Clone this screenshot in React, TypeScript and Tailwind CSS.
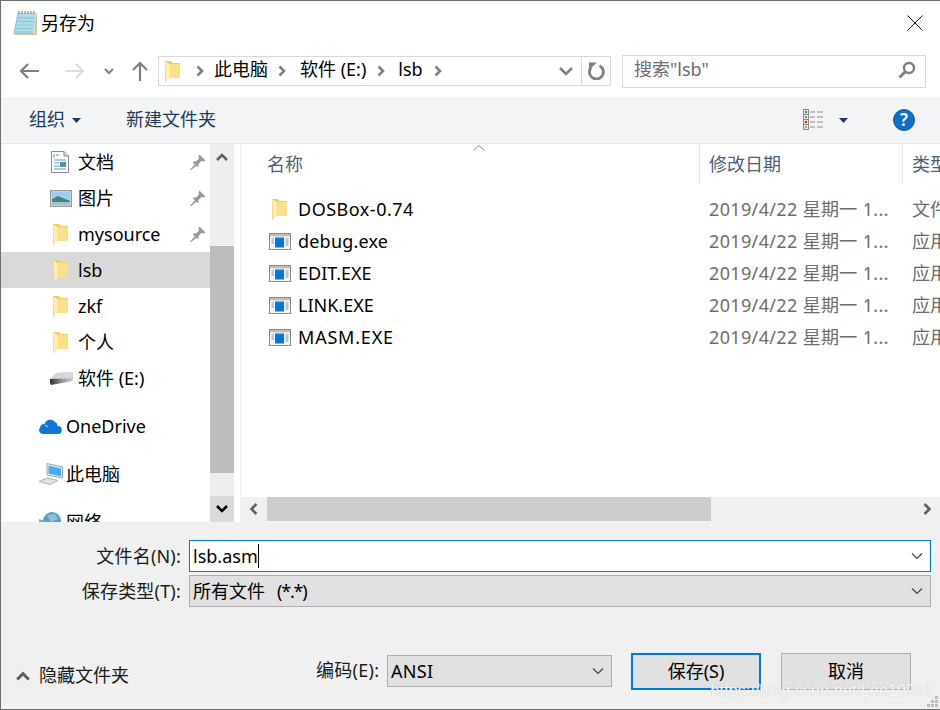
import React from "react";

const F = '"Noto Sans","Noto Sans CJK SC",sans-serif';

function Folder({ className = "" }: { className?: string }) {
  return (
    <svg width="15" height="21" viewBox="0 0 15 21" className={className}>
      <path d="M0 0 H6 L7.5 2 H15 V17 H4 Z" fill="#eec868" />
      <path d="M4 3 H15 V17 H4 Z" fill="#fbdf8c" />
      <path d="M0 0 L4.5 3 V18 L0.5 21 Z" fill="#ffeeb0" />
      <path d="M0 0 L0.5 21" stroke="#eecb70" strokeWidth="0.8" />
    </svg>
  );
}

function ExeIcon() {
  return (
    <svg width="22" height="17" viewBox="0 0 22 17">
      <rect x="0.5" y="0.5" width="21" height="16" fill="#f6f6f6" stroke="#8c8c8c" />
      <rect x="1" y="1" width="20" height="2.5" fill="#bfbfbf" />
      <rect x="6" y="4.5" width="9" height="10" fill="#0078d7" />
      <path d="M2.5 6h2.5M2.5 8h2.5M2.5 10h2.5M16.5 6h3M16.5 8h3M16.5 10h3M16.5 12h3" stroke="#8f8f8f" />
    </svg>
  );
}

function Pin() {
  return (
    <svg width="16" height="17" viewBox="0 0 16 17">
      <path d="M9.5 0.5 L15.5 6.5 L13.5 7.5 L11.5 7 L8.5 10 L8.5 12.5 L7.5 13 L3 8.5 L3.5 7.5 L6 7.5 L9 4.5 L8.5 2.5 Z" fill="#929ba3" />
      <path d="M5 10.5 L0.5 16 L6 11.5 Z" fill="#929ba3" stroke="#929ba3" />
    </svg>
  );
}

function Chev({ dir, color = "#606060", size = 12 }: { dir: "up" | "down" | "left" | "right"; color?: string; size?: number }) {
  const d = {
    up: "M1 9 L6 4 L11 9",
    down: "M1 3 L6 8 L11 3",
    left: "M8.5 1 L3.5 6 L8.5 11",
    right: "M3.5 1 L8.5 6 L3.5 11",
  }[dir];
  return (
    <svg width={size} height={size} viewBox="0 0 12 12">
      <path d={d} fill="none" stroke={color} strokeWidth="2.6" />
    </svg>
  );
}

function ThinChev() {
  return (
    <svg width="12" height="8" viewBox="0 0 12 8">
      <path d="M1 1.5 L6 6.5 L11 1.5" fill="none" stroke="#444" strokeWidth="1.2" />
    </svg>
  );
}

function Crumb() {
  return (
    <svg width="10" height="12" viewBox="0 0 10 12" className="shrink-0">
      <path d="M2.5 1.5 L7 6 L2.5 10.5" fill="none" stroke="#808080" strokeWidth="2.6" />
    </svg>
  );
}

function SideRow({ icon, label, pin, active, indent = "pl-[50px]", gap = "w-[27px]" }: { icon: React.ReactNode; label: string; pin?: boolean; active?: boolean; indent?: string; gap?: string }) {
  return (
    <div className={`h-[36px] flex items-center shrink-0 ${indent} pr-[4px] ${active ? "bg-[#d9d9d9]" : ""}`}>
      <div className={`${gap} flex items-center shrink-0`}>{icon}</div>
      <span className="flex-1 text-[18px] text-black whitespace-nowrap">{label}</span>
      {pin && <Pin />}
    </div>
  );
}

function FileRow({ icon, name, type, track = "" }: { icon: React.ReactNode; name: string; type: string; track?: string }) {
  return (
    <div className="h-[32px] flex items-center text-[18px] whitespace-nowrap">
      <div className="w-[29px] ml-[28px] flex justify-start shrink-0">{icon}</div>
      <span className={`w-[411px] shrink-0 text-black ${track}`}>{name}</span>
      <span className="w-[203px] shrink-0 text-[#6d6d6d] tracking-[0.35px]">2019/4/22 星期一 1...</span>
      <span className="text-[#6d6d6d]">{type}</span>
    </div>
  );
}

export default function App() {
  return (
    <div
      className="w-[940px] h-[710px] flex flex-col overflow-hidden relative bg-white border-t border-l border-b border-[#6e6e6e] text-black"
      style={{ fontFamily: F }}
    >
      {/* title bar */}
      <div className="h-[44px] shrink-0 flex items-center pl-[12px] pr-[16px]">
        <svg width="24" height="26" viewBox="0 0 24 26" className="mr-[4px]">
          <path d="M5 3 H23 L21 24 H1 Z" fill="#aeddea" />
          <path d="M4.5 8h17M4 11.5h17M3.5 15h17M3 18.5h17M2.5 22h17" stroke="#86c3d6" />
          <path d="M5 3 L1 24 H21" fill="none" stroke="#6fb2c8" strokeWidth="0.8" />
          <path d="M21 24 L23 3 L24 4 V25 L2 25 L1 24 Z" fill="#cfc6a2" />
          <path d="M6 1v3M9 1v3M12 1v3M15 1v3M18 1v3M21 1v3" stroke="#7f8f96" strokeWidth="1.2" />
        </svg>
        <span className="text-[18px] flex-1">另存为</span>
        <svg width="16" height="16" viewBox="0 0 16 16" className="mr-[1px]">
          <path d="M0.5 0.5 L15.5 15.5 M15.5 0.5 L0.5 15.5" stroke="#111" strokeWidth="1" />
        </svg>
      </div>

      {/* nav bar */}
      <div className="h-[52px] shrink-0 flex items-center">
        <svg width="20" height="16" viewBox="0 0 20 16" className="ml-[18px]">
          <path d="M20 8 H2 M9 1 L2 8 L9 15" fill="none" stroke="#7f7f7f" strokeWidth="2.2" />
        </svg>
        <svg width="20" height="16" viewBox="0 0 20 16" className="ml-[26px]">
          <path d="M0 8 H18 M11 1 L18 8 L11 15" fill="none" stroke="#dcdcdc" strokeWidth="2.2" />
        </svg>
        <svg width="10" height="7" viewBox="0 0 10 7" className="ml-[19px]">
          <path d="M1 1 L5 5 L9 1" fill="none" stroke="#808080" strokeWidth="2" />
        </svg>
        <svg width="16" height="20" viewBox="0 0 16 20" className="ml-[18px]">
          <path d="M8 20 V2 M1 9 L8 2 L15 9" fill="none" stroke="#7f7f7f" strokeWidth="2.2" />
        </svg>
        <div className="ml-[10px] w-[453px] h-[30px] border border-[#d9d9d9] flex items-center">
          <Folder className="ml-[6px] mr-[15px]" />
          <Crumb />
          <span className="text-[18px] ml-[9px] mr-[9px] pb-[4px] whitespace-nowrap">此电脑</span>
          <Crumb />
          <span className="text-[18px] ml-[13px] mr-[10px] pb-[4px] whitespace-nowrap">软件 (E:)</span>
          <Crumb />
          <span className="text-[18px] ml-[12px] mr-[10px] pb-[4px] whitespace-nowrap">lsb</span>
          <Crumb />
          <div className="flex-1" />
          <div className="w-[30px] flex justify-center">
            <svg width="14" height="10" viewBox="0 0 14 10">
              <path d="M1 2 L7 8 L13 2" fill="none" stroke="#808080" strokeWidth="2.6" />
            </svg>
          </div>
          <div className="w-[29px] h-full border-l border-[#d9d9d9] flex items-center justify-center">
            <svg width="18" height="18" viewBox="0 0 18 18">
              <path d="M4 5.5 A7 7 0 1 0 12.5 3.7" fill="none" stroke="#808080" strokeWidth="2.8" />
              <path d="M2 0.5 L10 0.5 L2 8 Z" fill="#808080" />
            </svg>
          </div>
        </div>
        <div className="ml-[11px] w-[304px] h-[33px] border border-[#d9d9d9] flex items-center pl-[11px] pr-[10px]">
          <span className="text-[18px] text-[#6d6d6d] flex-1 pb-[4px]">搜索"lsb"</span>
          <svg width="18" height="18" viewBox="0 0 18 18" className="mr-[-1px] mb-[2px]">
            <circle cx="11" cy="7" r="5" fill="none" stroke="#808080" strokeWidth="2.4" />
            <path d="M7.5 10.5 L1.5 16.5" stroke="#808080" strokeWidth="3" />
          </svg>
        </div>
      </div>

      {/* toolbar */}
      <div className="h-[47px] shrink-0 bg-[#f3f4f6] border-b border-[#e5e5e5] flex items-center text-[#1e395b]">
        <span className="text-[18px] ml-[28px] pb-[2px]">组织</span>
        <svg width="9" height="5" viewBox="0 0 9 5" className="ml-[7px]">
          <path d="M0 0 H9 L4.5 5 Z" fill="#1e395b" />
        </svg>
        <span className="text-[18px] ml-[45px] flex-1 pb-[2px]">新建文件夹</span>
        <svg width="22" height="22" viewBox="0 0 22 22" className="mr-[14px]">
          <rect x="0.5" y="0.5" width="5" height="5" fill="#dbe7f3" stroke="#8a8a8a" />
          <rect x="2" y="2" width="2" height="2" fill="#3f7fc0" />
          <rect x="0.5" y="5.5" width="5" height="5" fill="#eaf0d8" stroke="#8a8a8a" />
          <rect x="2" y="7" width="2" height="2" fill="#8a9a3a" />
          <rect x="0.5" y="10.5" width="5" height="5" fill="#f4dcdc" stroke="#8a8a8a" />
          <rect x="2" y="12" width="2" height="2" fill="#c8201c" />
          <rect x="0.5" y="15.5" width="5" height="5" fill="#e8ecd0" stroke="#8a8a8a" />
          <rect x="2" y="17" width="2" height="2" fill="#9ab060" />
          <path d="M7 3h5M14 3h6M7 8h5M14 8h6M7 13h5M14 13h6M7 18h5M14 18h6" stroke="#8a8a8a" />
        </svg>
        <svg width="9" height="5" viewBox="0 0 9 5" className="mr-[45px]">
          <path d="M0 0 H9 L4.5 5 Z" fill="#1e395b" />
        </svg>
        <div className="w-[22px] h-[22px] rounded-full bg-[#0f6fc6] border border-[#0b5aa6] text-white flex items-center justify-center text-[17px] font-semibold mr-[25px]">?</div>
      </div>

      {/* main */}
      <div className="flex-1 min-h-0 flex">
        {/* sidebar */}
        <div className="w-[209px] shrink-0 flex flex-col overflow-hidden">
          <SideRow icon={<svg width="18" height="22" viewBox="0 0 18 22"><path d="M0.5 0.5 H13 L17.5 5 V21.5 H0.5 Z" fill="#fff" stroke="#8c8c8c" /><path d="M13 0.5 V5 H17.5" fill="#ddd" stroke="#8c8c8c" /><path d="M3 3v4M5 4h3M3 9h12M3 12h5M3 15h5M3 18h12" stroke="#4aa0d8" /><rect x="9" y="11" width="6" height="5" fill="#5f8ba8" /></svg>} label="文档" pin />
          <SideRow indent="pl-[49px]" gap="w-[28px]" icon={<svg width="22" height="17" viewBox="0 0 22 17"><rect x="0.5" y="0.5" width="21" height="16" fill="#cfe3ef" stroke="#9a9a9a" strokeWidth="1.4" /><rect x="2" y="2" width="18" height="13" fill="#9fcdea" /><path d="M2 9 L8 6 L20 11 V15 H2 Z" fill="#4f7d78" /><path d="M2 12 H20 V15 H2 Z" fill="#9fc4d0" /></svg>} label="图片" pin />
          <SideRow indent="pl-[52px]" gap="w-[25px]" icon={<Folder />} label="mysource" pin />
          <SideRow indent="pl-[52px]" gap="w-[25px]" icon={<Folder />} label="lsb" active />
          <SideRow indent="pl-[52px]" gap="w-[25px]" icon={<Folder />} label="zkf" />
          <SideRow indent="pl-[52px]" gap="w-[25px]" icon={<Folder />} label="个人" />
          <SideRow indent="pl-[49px]" gap="w-[28px]" icon={<svg width="23" height="13" viewBox="0 0 23 13"><defs><linearGradient id="drv" x1="0" x2="1" y1="0" y2="0"><stop offset="0" stopColor="#2f2f2f" /><stop offset="0.5" stopColor="#8f8f8f" /><stop offset="1" stopColor="#d0d0d0" /></linearGradient></defs><path d="M0 7 L6 1 Q14 -0.5 23 0.5 V6 Z" fill="#d6d6d6" /><path d="M0 7 L23 6 V9 L1 13 L0 11 Z" fill="url(#drv)" /></svg>} label="软件 (E:)" />
          <div className="h-[12px] shrink-0" />
          <SideRow indent="pl-[38px]" gap="w-[27px]" icon={<svg width="23" height="16" viewBox="0 0 23 16"><path d="M4 16 A4 4 0 0 1 1 9.5 A4 4 0 0 1 5.5 6 A6 6 0 0 1 16 4 A4.5 4.5 0 0 1 18.5 8 A4 4 0 0 1 19 16 Z" fill="#0f78d4" /><path d="M6 7 L9 9" stroke="#fff" strokeWidth="0.8" /></svg>} label="OneDrive" />
          <div className="h-[12px] shrink-0" />
          <SideRow indent="pl-[38px]" gap="w-[27px]" icon={<svg width="24" height="22" viewBox="0 0 24 22"><path d="M8 0.5 L23.5 4 V15 L8 12 Z" fill="#e6eaee" stroke="#9aa7b0" /><path d="M9.5 2.5 L22 5.5 V13.5 L9.5 10.5 Z" fill="#42aef2" /><path d="M0 18.5 L8 15 L19 17.5 L11 21.5 Z" fill="#dfe3e6" stroke="#b0b0b0" /></svg>} label="此电脑" />
          <div className="h-[12px] shrink-0" />
          <SideRow indent="pl-[38px]" gap="w-[27px]" icon={<svg width="24" height="22" viewBox="0 0 24 22"><circle cx="13" cy="10" r="9" fill="#5c9cc8" /><path d="M8 4 L16 3 L19 8 L12 11 Z" fill="#8cc0dc" /><path d="M0 8 L12 12 V21 L0 18 Z" fill="#56aee8" /></svg>} label="网络" />
        </div>

        {/* vertical scrollbar */}
        <div className="w-[24px] shrink-0 bg-[#eeeeee] flex flex-col">
          <div className="h-[26px] flex items-center justify-center"><Chev dir="up" /></div>
          <div className="h-[76px]" />
          <div className="h-[227px] bg-[#bdbdbd]" />
          <div className="flex-1" />
          <div className="h-[26px] bg-[#dadada] flex items-center justify-center"><Chev dir="down" color="#000" /></div>
        </div>
        <div className="w-[7px] shrink-0 bg-white border-r border-[#f0f0f0]" />

        {/* file list */}
        <div className="flex-1 min-w-0 flex flex-col relative overflow-hidden">
          <div className="h-[40px] shrink-0 flex items-stretch text-[18px] text-[#4c607a] whitespace-nowrap">
            <div className="w-[459px] shrink-0 border-r border-[#e5e5e5] pl-[26px] pt-[1px] flex items-center">名称</div>
            <div className="w-[203px] shrink-0 border-r border-[#e5e5e5] pl-[9px] pt-[1px] flex items-center">修改日期</div>
            <div className="pl-[9px] pt-[1px] flex items-center">类型</div>
          </div>
          <svg width="12" height="6" viewBox="0 0 12 6" className="absolute left-[232px] top-[1px]">
            <path d="M0.5 5.5 L6 0.5 L11.5 5.5" fill="none" stroke="#888" />
          </svg>
          <div className="flex-1 pt-[9px]">
            <FileRow icon={<Folder className="ml-[3px]" />} name="DOSBox-0.74" type="文件" track="tracking-[0.5px]" />
            <FileRow icon={<ExeIcon />} name="debug.exe" type="应用" track="tracking-[0.2px]" />
            <FileRow icon={<ExeIcon />} name="EDIT.EXE" type="应用" />
            <FileRow icon={<ExeIcon />} name="LINK.EXE" type="应用" />
            <FileRow icon={<ExeIcon />} name="MASM.EXE" type="应用" track="tracking-[0.8px]" />
          </div>
          <div className="h-[25px] shrink-0 bg-[#f0f0f0] flex items-start">
            <div className="w-[26px] h-[24px] flex items-center justify-center"><Chev dir="left" /></div>
            <div className="w-[444px] h-[24px] bg-[#cdcdcd]" />
            <div className="flex-1" />
            <div className="w-[26px] h-[24px] flex items-center justify-center"><Chev dir="right" /></div>
          </div>
        </div>
      </div>

      {/* bottom panel */}
      <div className="h-[187px] shrink-0 bg-[#f0f0f0] flex flex-col text-[18px]">
        <div className="flex items-center mt-[18px] h-[32px]">
          <span className="w-[180px] text-right text-[#1a1a1a] tracking-[0.2px] whitespace-nowrap">文件名(N):</span>
          <div className="ml-[8px] w-[742px] h-full bg-white border border-[#0078d7] flex items-center pl-[3px] pr-[7px]">
            <span>lsb.asm</span>
            <span className="w-[1px] h-[24px] bg-black" />
            <div className="flex-1" />
            <ThinChev />
          </div>
        </div>
        <div className="flex items-center mt-[3px] h-[32px]">
          <span className="w-[180px] text-right text-[#1a1a1a] tracking-[0.2px] whitespace-nowrap">保存类型(T):</span>
          <div className="ml-[8px] w-[742px] h-full bg-[#e1e1e1] border border-[#adadad] flex items-center pl-[3px] pr-[7px]">
            <span>所有文件</span>
            <span className="ml-[12px] flex-1 tracking-[-1.2px]">(*.*)</span>
            <ThinChev />
          </div>
        </div>
        <div className="flex items-center mt-[50px] h-[37px] pl-[15px]">
          <Chev dir="up" size={14} />
          <span className="ml-[9px] text-[#1a1a1a]">隐藏文件夹</span>
        </div>
      </div>

      {/* bottom buttons over panel */}
      <div className="absolute left-[315px] top-[652px] flex items-start text-[18px] h-[37px]">
        <span className="w-[65px] mt-[4px] text-[#1a1a1a] tracking-[0.3px] whitespace-nowrap">编码(E):</span>
        <div className="ml-[6px] mt-[2px] w-[225px] h-[32px] bg-[#e1e1e1] border border-[#adadad] flex items-center pl-[3px] pr-[7px]">
          <span className="flex-1 tracking-[0.3px]">ANSI</span>
          <ThinChev />
        </div>
        <button className="ml-[19px] w-[130px] h-[37px] bg-[#e1e1e1] border-2 border-[#0078d7] text-[18px]">保存(S)</button>
        <button className="ml-[20px] w-[130px] h-[37px] bg-[#e1e1e1] border border-[#adadad] text-[18px]">取消</button>
      </div>

      <span className="absolute right-[7px] bottom-[6px] text-[16px] text-white/90 tracking-[0.12px] whitespace-nowrap [text-shadow:0_0_1px_#b0b0b0]" style={{ fontFamily: '"Liberation Sans",sans-serif' }}>https://blog.csdn.net/Lee19991</span>
      <svg width="12" height="12" viewBox="0 0 12 12" className="absolute right-[1px] bottom-[1px]">
        <path d="M8 0h3v3h-3zM4 4h3v3h-3zM8 4h3v3h-3zM0 8h3v3h-3zM4 8h3v3h-3zM8 8h3v3h-3z" fill="#bdbdbd" />
      </svg>
    </div>
  );
}
